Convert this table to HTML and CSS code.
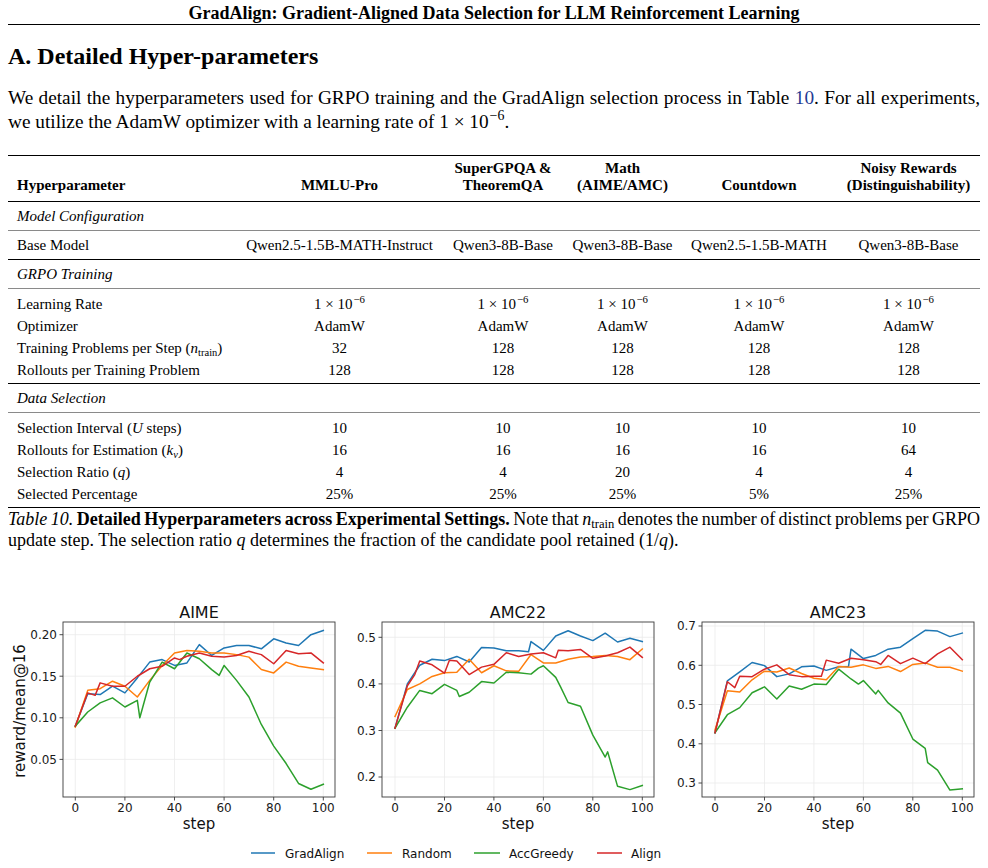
FILE: index.html
```html
<!DOCTYPE html>
<html lang="en">
<head>
<meta charset="utf-8">
<title>GradAlign – Detailed Hyper-parameters</title>
<link rel="stylesheet" href="styles.css">
</head>
<body>
<div class="page">
  <header class="runhead">GradAlign: Gradient-Aligned Data Selection for LLM Reinforcement Learning</header>

  <h1 class="sec-title">A. Detailed Hyper-parameters</h1>

  <p class="intro">
    <span class="jl">We detail the hyperparameters used for GRPO training and the GradAlign selection process in Table <span class="ref">10</span>. For all experiments,</span>
    <span class="line">we utilize the AdamW optimizer with a learning rate of 1<span class="times">×</span>10<sup>−6</sup>.</span>
  </p>

  <table class="hp">
    <colgroup>
      <col class="c1"><col class="c2"><col class="c3"><col class="c4"><col class="c5"><col class="c6">
    </colgroup>
    <thead>
      <tr class="head">
        <th class="lab">Hyperparameter</th>
        <th>MMLU-Pro</th>
        <th>SuperGPQA &amp;<br>TheoremQA</th>
        <th>Math<br>(AIME/AMC)</th>
        <th>Countdown</th>
        <th>Noisy Rewards<br>(Distinguishability)</th>
      </tr>
    </thead>
    <tbody>
      <tr class="sec rule-gray"><td class="lab" colspan="6">Model Configuration</td></tr>
      <tr class="one rule-black">
        <td class="lab">Base Model</td><td>Qwen2.5-1.5B-MATH-Instruct</td><td>Qwen3-8B-Base</td><td>Qwen3-8B-Base</td><td>Qwen2.5-1.5B-MATH</td><td>Qwen3-8B-Base</td>
      </tr>
      <tr class="sec rule-gray"><td class="lab" colspan="6">GRPO Training</td></tr>
      <tr class="first">
        <td class="lab">Learning Rate</td>
        <td>1<span class="times">×</span>10<sup>−6</sup></td>
        <td>1<span class="times">×</span>10<sup>−6</sup></td>
        <td>1<span class="times">×</span>10<sup>−6</sup></td>
        <td>1<span class="times">×</span>10<sup>−6</sup></td>
        <td>1<span class="times">×</span>10<sup>−6</sup></td>
      </tr>
      <tr>
        <td class="lab">Optimizer</td><td>AdamW</td><td>AdamW</td><td>AdamW</td><td>AdamW</td><td>AdamW</td>
      </tr>
      <tr>
        <td class="lab">Training Problems per Step (<i>n</i><sub>train</sub>)</td><td>32</td><td>128</td><td>128</td><td>128</td><td>128</td>
      </tr>
      <tr class="last rule-black">
        <td class="lab">Rollouts per Training Problem</td><td>128</td><td>128</td><td>128</td><td>128</td><td>128</td>
      </tr>
      <tr class="sec rule-gray"><td class="lab" colspan="6">Data Selection</td></tr>
      <tr class="first">
        <td class="lab">Selection Interval (<i>U</i> steps)</td><td>10</td><td>10</td><td>10</td><td>10</td><td>10</td>
      </tr>
      <tr>
        <td class="lab">Rollouts for Estimation (<i>k</i><sub><i>v</i></sub>)</td><td>16</td><td>16</td><td>16</td><td>16</td><td>64</td>
      </tr>
      <tr>
        <td class="lab">Selection Ratio (<i>q</i>)</td><td>4</td><td>4</td><td>20</td><td>4</td><td>4</td>
      </tr>
      <tr class="last rule-bottom">
        <td class="lab">Selected Percentage</td><td>25%</td><td>25%</td><td>25%</td><td>5%</td><td>25%</td>
      </tr>
    </tbody>
  </table>

  <p class="caption">
    <span class="jl tight"><i>Table 10.</i> <b>Detailed Hyperparameters across Experimental Settings.</b> Note that <i>n</i><sub>train</sub> denotes the number of distinct problems per GRPO</span>
    <span class="line">update step. The selection ratio <i>q</i> determines the fraction of the candidate pool retained (1/<i>q</i>).</span>
  </p>

  <figure class="fig">
    <svg class="chart" width="988" height="278" viewBox="0 590 988 278" xmlns="http://www.w3.org/2000/svg">
      <g class="grid" stroke="#ebebeb" stroke-width="0.8">
        <path d="M75.3 622V797M124.9 622V797M174.5 622V797M224.1 622V797M273.7 622V797M323.3 622V797"/>
        <path d="M63 759.4H335M63 717.8H335M63 676.2H335M63 634.7H335"/>
        <path d="M395 622V797M444.5 622V797M493.9 622V797M543.4 622V797M592.8 622V797M642.3 622V797"/>
        <path d="M382 777H654M382 730.5H654M382 683.9H654M382 637.3H654"/>
        <path d="M715 622V797M764.5 622V797M813.9 622V797M863.4 622V797M912.8 622V797M962.3 622V797"/>
        <path d="M702 783H974M702 743.8H974M702 704.5H974M702 665.3H974M702 626H974"/>
      </g>

      <g fill="none" stroke-width="1.5" stroke-linejoin="round" stroke-linecap="square">
        <g transform="matrix(2.48 0 0 -831.3 75.33 800.93)">
          <polyline vector-effect="non-scaling-stroke" stroke="#1f77b4" points="0,0.09 5,0.129 10,0.128 15,0.138 20,0.130 25,0.148 30,0.167 35,0.170 40,0.163 45,0.166 50,0.188 55,0.175 60,0.184 65,0.187 70,0.187 75,0.183 80,0.195 85,0.190 90,0.187 95,0.200 100,0.205"/>
          <polyline vector-effect="non-scaling-stroke" stroke="#ff7f0e" points="0,0.089 5,0.133 10,0.135 15,0.144 20,0.138 25,0.125 30,0.145 35,0.163 40,0.178 45,0.181 50,0.180 55,0.178 60,0.178 65,0.176 70,0.173 75,0.158 80,0.154 85,0.167 90,0.162 95,0.160 100,0.158"/>
          <polyline vector-effect="non-scaling-stroke" stroke="#2ca02c" points="0,0.09 5,0.107 10,0.118 15,0.124 20,0.113 25,0.121 26,0.100 30,0.143 35,0.167 40,0.159 45,0.178 50,0.171 55,0.158 58,0.151 60,0.163 65,0.145 70,0.125 75,0.092 80,0.066 85,0.045 90,0.021 95,0.014 100,0.020"/>
          <polyline vector-effect="non-scaling-stroke" stroke="#d62728" points="0,0.09 5,0.130 8,0.127 10,0.142 15,0.138 20,0.138 25,0.150 30,0.159 35,0.162 40,0.172 42,0.170 45,0.174 50,0.178 55,0.174 60,0.173 65,0.175 70,0.180 75,0.176 80,0.165 85,0.181 90,0.177 95,0.178 100,0.166"/>
        </g>
        <g transform="matrix(2.473 0 0 -465.67 395 870.17)">
          <polyline vector-effect="non-scaling-stroke" stroke="#1f77b4" points="0,0.305 5,0.40 10,0.44 15,0.453 20,0.450 25,0.459 30,0.447 35,0.478 40,0.477 45,0.471 50,0.471 54,0.469 55,0.491 60,0.472 65,0.503 70,0.514 75,0.503 80,0.493 85,0.509 90,0.490 95,0.498 100,0.491"/>
          <polyline vector-effect="non-scaling-stroke" stroke="#ff7f0e" points="0,0.330 5,0.388 10,0.400 15,0.416 20,0.424 25,0.425 30,0.453 35,0.424 40,0.439 45,0.428 50,0.427 55,0.463 60,0.445 65,0.445 70,0.453 75,0.458 80,0.459 85,0.461 90,0.459 95,0.452 100,0.475"/>
          <polyline vector-effect="non-scaling-stroke" stroke="#2ca02c" points="0,0.305 5,0.350 10,0.386 15,0.379 20,0.399 25,0.386 26,0.373 30,0.382 35,0.405 40,0.402 45,0.425 50,0.424 55,0.421 58,0.434 60,0.439 65,0.414 67,0.393 70,0.360 75,0.352 80,0.290 85,0.243 86,0.254 90,0.180 95,0.173 100,0.182"/>
          <polyline vector-effect="non-scaling-stroke" stroke="#d62728" points="0,0.305 5,0.396 8,0.420 10,0.449 15,0.441 20,0.423 22,0.451 25,0.449 30,0.420 35,0.436 40,0.442 45,0.467 50,0.459 55,0.464 60,0.467 65,0.456 66,0.472 70,0.471 75,0.474 80,0.455 85,0.460 90,0.467 95,0.479 100,0.457"/>
        </g>
        <g transform="matrix(2.473 0 0 -392.5 715 900.75)">
          <polyline vector-effect="non-scaling-stroke" stroke="#1f77b4" points="0,0.428 5,0.560 10,0.583 15,0.607 20,0.599 25,0.571 30,0.578 35,0.596 40,0.598 45,0.587 50,0.596 54,0.597 55,0.641 60,0.617 65,0.625 70,0.641 75,0.646 80,0.668 85,0.689 90,0.687 95,0.673 100,0.682"/>
          <polyline vector-effect="non-scaling-stroke" stroke="#ff7f0e" points="0,0.435 5,0.535 10,0.532 15,0.563 20,0.585 25,0.583 30,0.593 35,0.579 40,0.567 45,0.563 50,0.597 55,0.595 60,0.601 65,0.592 70,0.597 75,0.584 80,0.602 85,0.606 90,0.595 95,0.595 100,0.585"/>
          <polyline vector-effect="non-scaling-stroke" stroke="#2ca02c" points="0,0.428 5,0.474 10,0.492 15,0.530 20,0.545 25,0.514 30,0.547 35,0.539 40,0.552 45,0.551 50,0.590 55,0.565 58,0.552 60,0.561 65,0.527 66,0.536 70,0.504 75,0.478 80,0.412 85,0.388 86,0.352 90,0.333 95,0.282 100,0.285"/>
          <polyline vector-effect="non-scaling-stroke" stroke="#d62728" points="0,0.428 5,0.558 8,0.543 10,0.572 15,0.571 20,0.590 25,0.601 30,0.576 35,0.571 40,0.572 43,0.572 45,0.613 50,0.605 55,0.618 60,0.614 65,0.609 67,0.602 70,0.625 75,0.604 80,0.618 85,0.604 90,0.629 95,0.646 100,0.614"/>
        </g>
      </g>

      <g class="spines" fill="none" stroke="#3a3a3a" stroke-width="0.9">
        <rect x="63" y="622" width="272" height="175"/>
        <rect x="382" y="622" width="272" height="175"/>
        <rect x="702" y="622" width="272" height="175"/>
        <path d="M59.5 759.4H63M59.5 717.8H63M59.5 676.2H63M59.5 634.7H63
                 M75.3 797V800.5M124.9 797V800.5M174.5 797V800.5M224.1 797V800.5M273.7 797V800.5M323.3 797V800.5
                 M378.5 777H382M378.5 730.5H382M378.5 683.9H382M378.5 637.3H382
                 M395 797V800.5M444.5 797V800.5M493.9 797V800.5M543.4 797V800.5M592.8 797V800.5M642.3 797V800.5
                 M698.5 783H702M698.5 743.8H702M698.5 704.5H702M698.5 665.3H702M698.5 626H702
                 M715 797V800.5M764.5 797V800.5M813.9 797V800.5M863.4 797V800.5M912.8 797V800.5M962.3 797V800.5"/>
      </g>

      <g class="ticklabels" font-family="DejaVu Sans, sans-serif" font-size="12" fill="#1a1a1a">
        <g text-anchor="end">
          <text x="57" y="763.7">0.05</text>
          <text x="57" y="722.1">0.10</text>
          <text x="57" y="680.5">0.15</text>
          <text x="57" y="639">0.20</text>

          <text x="376" y="781.3">0.2</text>
          <text x="376" y="734.8">0.3</text>
          <text x="376" y="688.2">0.4</text>
          <text x="376" y="641.6">0.5</text>

          <text x="696" y="787.3">0.3</text>
          <text x="696" y="748.1">0.4</text>
          <text x="696" y="708.8">0.5</text>
          <text x="696" y="669.6">0.6</text>
          <text x="696" y="630.3">0.7</text>
        </g>
        <g text-anchor="middle">
          <text x="75.3" y="811.5">0</text>
          <text x="124.9" y="811.5">20</text>
          <text x="174.5" y="811.5">40</text>
          <text x="224.1" y="811.5">60</text>
          <text x="273.7" y="811.5">80</text>
          <text x="323.3" y="811.5">100</text>

          <text x="395" y="811.5">0</text>
          <text x="444.5" y="811.5">20</text>
          <text x="493.9" y="811.5">40</text>
          <text x="543.4" y="811.5">60</text>
          <text x="592.8" y="811.5">80</text>
          <text x="642.3" y="811.5">100</text>

          <text x="715" y="811.5">0</text>
          <text x="764.5" y="811.5">20</text>
          <text x="813.9" y="811.5">40</text>
          <text x="863.4" y="811.5">60</text>
          <text x="912.8" y="811.5">80</text>
          <text x="962.3" y="811.5">100</text>
        </g>
      </g>

      <g class="labels" font-family="DejaVu Sans, sans-serif" fill="#111" text-anchor="middle">
        <text x="199" y="618" font-size="16">AIME</text>
        <text x="518" y="618" font-size="16">AMC22</text>
        <text x="838" y="618" font-size="16">AMC23</text>
        <text x="199" y="829" font-size="15">step</text>
        <text x="518" y="829" font-size="15">step</text>
        <text x="838" y="829" font-size="15">step</text>
        <text transform="translate(25 711) rotate(-90)" font-size="15">reward/mean@16</text>
      </g>

      <g class="legend" font-family="DejaVu Sans, sans-serif" font-size="12" fill="#111">
        <path d="M251 853H275" stroke="#1f77b4" stroke-width="1.5"/>
        <text x="285" y="857.5">GradAlign</text>
        <path d="M367 853H392" stroke="#ff7f0e" stroke-width="1.5"/>
        <text x="402" y="857.5">Random</text>
        <path d="M474 853H500" stroke="#2ca02c" stroke-width="1.5"/>
        <text x="509" y="857.5">AccGreedy</text>
        <path d="M597 853H622" stroke="#d62728" stroke-width="1.5"/>
        <text x="631" y="857.5">Align</text>
      </g>
    </svg>
  </figure>
</div>
</body>
</html>
```

FILE: styles.css
```css
html, body {
  margin: 0;
  padding: 0;
  background: #ffffff;
}

body {
  color: #000;
  font-family: "Liberation Serif", "Times New Roman", serif;
}

.page {
  width: 972px;
  padding: 0 8px;
}

.runhead {
  font-size: 18px;
  font-weight: bold;
  line-height: 22px;
  text-align: center;
  padding-top: 2px;
  border-bottom: 1.6px solid #000;
}

.sec-title {
  font-size: 24px;
  font-weight: bold;
  line-height: 28px;
  margin: 17px 0 0;
}

.intro {
  font-size: 19.3px;
  line-height: 24px;
  margin: 16px 0 0;
}

.jl {
  display: block;
  text-align: justify;
  text-align-last: justify;
}

.tight {
  word-spacing: -1.5px;
}

.line {
  display: block;
}

.ref {
  color: #1f3a93;
}

.times {
  padding: 0 0.25em;
}

sup {
  font-size: 0.72em;
  line-height: 0;
  vertical-align: 0.55em;
  padding-left: 1px;
}

sub {
  font-size: 0.7em;
  line-height: 0;
  vertical-align: -0.25em;
}

/* table */
.hp {
  width: 972px;
  margin-top: 21px;
  border-collapse: collapse;
  table-layout: fixed;
  font-size: 15px;
}

.c1 { width: 229px; }
.c2 { width: 205px; }
.c3 { width: 122px; }
.c4 { width: 117px; }
.c5 { width: 156px; }
.c6 { width: 143px; }

.hp th,
.hp td {
  padding: 0;
  text-align: center;
  white-space: nowrap;
  line-height: 22px;
}

.hp .lab {
  text-align: left;
  padding-left: 9px;
}

.hp thead tr {
  border-top: 1.6px solid #000;
  border-bottom: 1px solid #000;
}

.hp th {
  font-weight: bold;
  line-height: 17px;
  vertical-align: bottom;
  padding-top: 4px;
  padding-bottom: 7px;
}

.hp .sec td {
  font-style: italic;
  padding-top: 3px;
  padding-bottom: 3px;
}

.hp .one td {
  padding-top: 3px;
  padding-bottom: 3px;
}

.hp .first td {
  padding-top: 4px;
}

.hp .last td {
  padding-bottom: 2px;
}

.hp .rule-gray {
  border-bottom: 1.5px solid #8a8a8a;
}

.hp .rule-black {
  border-bottom: 1px solid #000;
}

.hp .rule-bottom {
  border-bottom: 1.6px solid #000;
}

/* caption */
.caption {
  font-size: 18px;
  line-height: 21px;
  margin: 1px 0 0;
}

/* figure */
.fig {
  margin: 39px 0 0 -8px;
  width: 988px;
}

.chart {
  display: block;
}
```
